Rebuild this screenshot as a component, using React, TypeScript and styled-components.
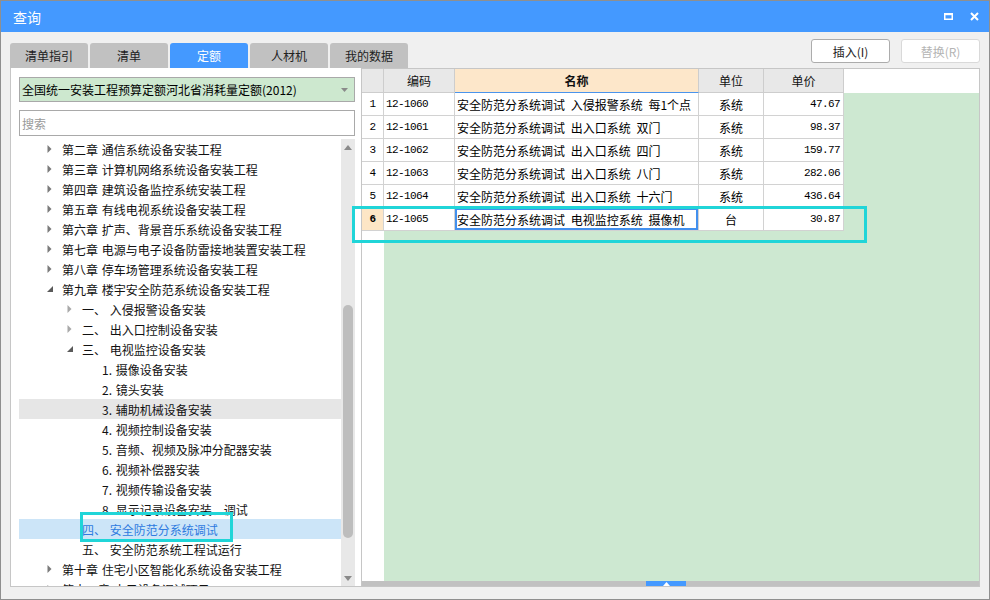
import React from 'react';
import styled, { createGlobalStyle } from 'styled-components';

const GlobalStyle = createGlobalStyle`
  html, body {
    margin: 0;
    padding: 0;
    background: #fff;
  }
  body {
    font-family: 'Noto Sans CJK SC', 'Noto Sans', sans-serif;
    font-size: 12px;
    color: #1a1a1a;
  }
  * {
    box-sizing: border-box;
  }
`;

const Window = styled.div`
  position: relative;
  width: 990px;
  height: 600px;
  border: 1px solid #8f8f8f;
  background: #f0f0f0;
  display: flex;
  flex-direction: column;
`;

const TitleBar = styled.div`
  flex: none;
  height: 31px;
  background: #4499ff;
  color: #fff;
  display: flex;
  align-items: center;
  justify-content: space-between;
  padding: 0 10px 0 12px;
  font-size: 14px;
`;

const TitleIcons = styled.div`
  display: flex;
  align-items: center;
  gap: 17px;
`;

const Body = styled.div`
  flex: 1;
  min-height: 0;
  display: flex;
  flex-direction: column;
  padding: 7px 9px 12px 9px;
`;

const TopRow = styled.div`
  flex: none;
  height: 29px;
  display: flex;
  justify-content: space-between;
`;

const Tabs = styled.div`
  align-self: flex-end;
  display: flex;
  gap: 2px;
`;

const Tab = styled.div<{ $active?: boolean }>`
  width: 78px;
  height: 25px;
  border-radius: 3px 3px 0 0;
  background: ${p => (p.$active ? '#4499ff' : '#c1c1c1')};
  color: ${p => (p.$active ? '#fff' : '#222')};
  display: flex;
  align-items: center;
  justify-content: center;
  font-size: 12px;
`;

const Buttons = styled.div`
  align-self: flex-start;
  display: flex;
  gap: 11px;
`;

const Button = styled.div<{ $disabled?: boolean }>`
  width: 79px;
  height: 24px;
  border-radius: 3px;
  border: 1px solid ${p => (p.$disabled ? '#d9d9d9' : '#acacac')};
  background: #fff;
  color: ${p => (p.$disabled ? '#b4b4b4' : '#222')};
  display: flex;
  align-items: center;
  justify-content: center;
  font-size: 12px;
`;

const Content = styled.div`
  flex: 1;
  min-height: 0;
  display: flex;
`;

const LeftPanel = styled.div`
  width: 352px;
  flex: none;
  background: #fff;
  border: 1px solid #c6c6c6;
  border-top: none;
  padding: 9px 6px 0 8px;
  display: flex;
  flex-direction: column;
`;

const Select = styled.div`
  height: 25px;
  flex: none;
  background: #cde8cf;
  border: 1px solid #a9a9a9;
  display: flex;
  align-items: center;
  justify-content: space-between;
  padding: 0 6px 0 2px;
  color: #000;
`;

const Search = styled.div`
  height: 26px;
  flex: none;
  margin-top: 8px;
  border: 1px solid #a9a9a9;
  display: flex;
  align-items: center;
  padding-left: 2px;
  color: #9a9a9a;
`;

const TreeBox = styled.div`
  flex: 1;
  min-height: 0;
  margin-top: 3px;
  display: flex;
`;

const TreeList = styled.div`
  flex: 1;
  overflow: hidden;
`;

const TreeRow = styled.div<{ $level: number; $state?: 'hover' | 'selected' }>`
  height: 20px;
  display: flex;
  align-items: center;
  padding-left: ${p => 8 + p.$level * 20}px;
  white-space: pre;
  word-spacing: 1px;
  background: ${p =>
    p.$state === 'hover' ? '#e6e6e6' : p.$state === 'selected' ? '#cce5f8' : 'transparent'};
  color: ${p => (p.$state === 'selected' ? '#2e7be0' : '#111')};
`;

const Caret = styled.span`
  width: 15px;
  flex: none;
  display: flex;
  align-items: center;
`;

const VScroll = styled.div`
  width: 14px;
  flex: none;
  background: #e8e8e8;
  display: flex;
  flex-direction: column;
  align-items: center;
`;

const ScrollArrow = styled.div`
  height: 16px;
  flex: none;
  display: flex;
  align-items: center;
  justify-content: center;
`;

const VThumb = styled.div`
  width: 10px;
  height: 233px;
  margin-top: 150px;
  border-radius: 5px;
  background: #bdbdbd;
`;

const Spring = styled.div`
  flex: 1;
`;

const Grid = styled.div`
  flex: 1;
  min-width: 0;
  background: #fff;
  border-top: 1px solid #c6c6c6;
  border-right: 1px solid #c6c6c6;
  border-bottom: 1px solid #c6c6c6;
  display: flex;
  flex-direction: column;
`;

const HeaderRow = styled.div`
  display: flex;
  height: 24px;
  flex: none;
`;

const HeadCell = styled.div<{ $w: number; $hl?: boolean }>`
  width: ${p => p.$w}px;
  flex: none;
  display: flex;
  align-items: center;
  justify-content: center;
  background: ${p => (p.$hl ? '#fde7ca' : '#e8e8e8')};
  border-right: 1px solid #cdcdcd;
  border-bottom: 1px solid ${p => (p.$hl ? '#4a94ec' : '#cdcdcd')};
  font-weight: ${p => (p.$hl ? 700 : 400)};
  color: #111;
`;

const GridBody = styled.div`
  flex: 1;
  min-height: 0;
  background: linear-gradient(to right, #fff 22px, #cde8d1 22px);
`;

const Row = styled.div`
  display: flex;
  height: 23px;
`;

const Cell = styled.div<{ $w: number; $align?: 'left' | 'center' | 'right'; $mono?: boolean; $current?: boolean; $bg?: string; $bold?: boolean }>`
  width: ${p => p.$w}px;
  flex: none;
  display: flex;
  align-items: center;
  justify-content: ${p => (p.$align === 'right' ? 'flex-end' : p.$align === 'center' ? 'center' : 'flex-start')};
  padding: ${p => (p.$align === 'right' ? '0 3px 0 0' : p.$align === 'center' ? '0' : '0 0 0 2px')};
  background: ${p => p.$bg || '#fff'};
  border-right: 1px solid #d2d2d2;
  border-bottom: 1px solid #d2d2d2;
  box-shadow: ${p => (p.$current ? 'inset 0 0 0 2px #4290ee' : 'none')};
  font-family: ${p => (p.$mono ? "'Liberation Mono', monospace" : "'Noto Sans CJK SC', sans-serif")};
  font-size: ${p => (p.$mono ? '11px' : '12px')};
  letter-spacing: ${p => (p.$mono ? '-0.6px' : '0')};
  word-spacing: 3px;
  font-weight: ${p => (p.$bold ? 700 : 400)};
  white-space: nowrap;
  overflow: hidden;
  color: #000;
`;

const HScroll = styled.div`
  height: 5px;
  flex: none;
  background: #c1c1c1;
  display: flex;
`;

const HThumb = styled.div`
  width: 40px;
  margin-left: 284px;
  background: #4499ff;
  display: flex;
  align-items: center;
  justify-content: center;
`;

const Annotation = styled.div<{ $x: number; $y: number; $w: number; $h: number }>`
  position: absolute;
  left: ${p => p.$x}px;
  top: ${p => p.$y}px;
  width: ${p => p.$w}px;
  height: ${p => p.$h}px;
  border: 3px solid #20d5d8;
  pointer-events: none;
`;

const COLS = [22, 71, 244, 65, 80];

type TreeItem = {
  level: number;
  text: string;
  caret?: 'closed' | 'open' | 'closedLight';
  state?: 'hover' | 'selected';
};

const tree: TreeItem[] = [
  { level: 1, caret: 'closed', text: '第二章 通信系统设备安装工程' },
  { level: 1, caret: 'closed', text: '第三章 计算机网络系统设备安装工程' },
  { level: 1, caret: 'closed', text: '第四章 建筑设备监控系统安装工程' },
  { level: 1, caret: 'closed', text: '第五章 有线电视系统设备安装工程' },
  { level: 1, caret: 'closed', text: '第六章 扩声、背景音乐系统设备安装工程' },
  { level: 1, caret: 'closed', text: '第七章 电源与电子设备防雷接地装置安装工程' },
  { level: 1, caret: 'closed', text: '第八章 停车场管理系统设备安装工程' },
  { level: 1, caret: 'open', text: '第九章 楼宇安全防范系统设备安装工程' },
  { level: 2, caret: 'closedLight', text: '一、 入侵报警设备安装' },
  { level: 2, caret: 'closedLight', text: '二、 出入口控制设备安装' },
  { level: 2, caret: 'open', text: '三、 电视监控设备安装' },
  { level: 3, text: '1. 摄像设备安装' },
  { level: 3, text: '2. 镜头安装' },
  { level: 3, text: '3. 辅助机械设备安装', state: 'hover' },
  { level: 3, text: '4. 视频控制设备安装' },
  { level: 3, text: '5. 音频、视频及脉冲分配器安装' },
  { level: 3, text: '6. 视频补偿器安装' },
  { level: 3, text: '7. 视频传输设备安装' },
  { level: 3, text: '8. 显示记录设备安装、调试' },
  { level: 2, text: '四、 安全防范分系统调试', state: 'selected' },
  { level: 2, text: '五、 安全防范系统工程试运行' },
  { level: 1, caret: 'closed', text: '第十章 住宅小区智能化系统设备安装工程' },
  { level: 1, caret: 'closed', text: '第十一章 电子设备调试项目' },
];

const rows = [
  ['1', '12-1060', '安全防范分系统调试 入侵报警系统 每1个点', '系统', '47.67'],
  ['2', '12-1061', '安全防范分系统调试 出入口系统 双门', '系统', '98.37'],
  ['3', '12-1062', '安全防范分系统调试 出入口系统 四门', '系统', '159.77'],
  ['4', '12-1063', '安全防范分系统调试 出入口系统 八门', '系统', '282.06'],
  ['5', '12-1064', '安全防范分系统调试 出入口系统 十六门', '系统', '436.64'],
  ['6', '12-1065', '安全防范分系统调试 电视监控系统 摄像机', '台', '30.87'],
];

const CaretIcon: React.FC<{ kind?: TreeItem['caret'] }> = ({ kind }) => {
  if (kind === 'open') {
    return (
      <svg width="6" height="6" viewBox="0 0 6 6">
        <path d="M6 0 L6 6 L0 6 Z" fill="#5a5a5a" />
      </svg>
    );
  }
  if (kind === 'closed' || kind === 'closedLight') {
    return (
      <svg width="5" height="8" viewBox="0 0 5 8">
        <path d="M0.5 0 L4.5 4 L0.5 8 Z" fill={kind === 'closed' ? '#7a7a7a' : '#a8a8a8'} />
      </svg>
    );
  }
  return null;
};

const App: React.FC = () => {
  const currentRow = 5;

  return (
    <>
      <GlobalStyle />
      <Window>
        <TitleBar>
          <span>查询</span>
          <TitleIcons>
            <svg width="9" height="7" viewBox="0 0 9 7">
              <rect x="0.75" y="1" width="7.5" height="5.25" fill="none" stroke="#fff" strokeWidth="1.5" />
              <rect x="0" y="0" width="9" height="2.2" fill="#fff" />
            </svg>
            <svg width="9" height="9" viewBox="0 0 9 9">
              <path d="M1 1 L8 8 M8 1 L1 8" stroke="#fff" strokeWidth="2" />
            </svg>
          </TitleIcons>
        </TitleBar>

        <Body>
          <TopRow>
            <Tabs>
              <Tab>清单指引</Tab>
              <Tab>清单</Tab>
              <Tab $active>定额</Tab>
              <Tab>人材机</Tab>
              <Tab>我的数据</Tab>
            </Tabs>
            <Buttons>
              <Button>插入(I)</Button>
              <Button $disabled>替换(R)</Button>
            </Buttons>
          </TopRow>

          <Content>
            <LeftPanel>
              <Select>
                <span>全国统一安装工程预算定额河北省消耗量定额(2012)</span>
                <svg width="7" height="4" viewBox="0 0 7 4">
                  <path d="M0 0 L7 0 L3.5 4 Z" fill="#8a8a8a" />
                </svg>
              </Select>
              <Search>搜索</Search>
              <TreeBox>
                <TreeList>
                  {tree.map((item, i) => (
                    <TreeRow key={i} $level={item.level} $state={item.state}>
                      <Caret>
                        <CaretIcon kind={item.caret} />
                      </Caret>
                      <span>{item.text}</span>
                    </TreeRow>
                  ))}
                </TreeList>
                <VScroll>
                  <ScrollArrow>
                    <svg width="8" height="5" viewBox="0 0 8 5">
                      <path d="M0 5 L4 0 L8 5 Z" fill="#8a8a8a" />
                    </svg>
                  </ScrollArrow>
                  <VThumb />
                  <Spring />
                  <ScrollArrow>
                    <svg width="8" height="5" viewBox="0 0 8 5">
                      <path d="M0 0 L8 0 L4 5 Z" fill="#8a8a8a" />
                    </svg>
                  </ScrollArrow>
                </VScroll>
              </TreeBox>
            </LeftPanel>

            <Grid>
              <HeaderRow>
                <HeadCell $w={COLS[0]} />
                <HeadCell $w={COLS[1]}>编码</HeadCell>
                <HeadCell $w={COLS[2]} $hl>名称</HeadCell>
                <HeadCell $w={COLS[3]}>单位</HeadCell>
                <HeadCell $w={COLS[4]}>单价</HeadCell>
              </HeaderRow>
              <GridBody>
                {rows.map((r, i) => {
                  const cur = i === currentRow;
                  return (
                    <Row key={r[0]}>
                      <Cell $w={COLS[0]} $align="center" $mono $bg={cur ? '#fde6c6' : undefined} $bold={cur}>
                        {r[0]}
                      </Cell>
                      <Cell $w={COLS[1]} $mono>{r[1]}</Cell>
                      <Cell $w={COLS[2]} $current={cur}>{r[2]}</Cell>
                      <Cell $w={COLS[3]} $align="center">{r[3]}</Cell>
                      <Cell $w={COLS[4]} $align="right" $mono>{r[4]}</Cell>
                    </Row>
                  );
                })}
              </GridBody>
              <HScroll>
                <HThumb>
                  <svg width="7" height="4" viewBox="0 0 7 4">
                    <path d="M0 4 L3.5 0 L7 4 Z" fill="#fff" />
                  </svg>
                </HThumb>
              </HScroll>
            </Grid>
          </Content>
        </Body>

        <Annotation $x={351} $y={205} $w={515} $h={37} />
        <Annotation $x={79} $y={511} $w={153} $h={30} />
      </Window>
    </>
  );
};

export default App;
